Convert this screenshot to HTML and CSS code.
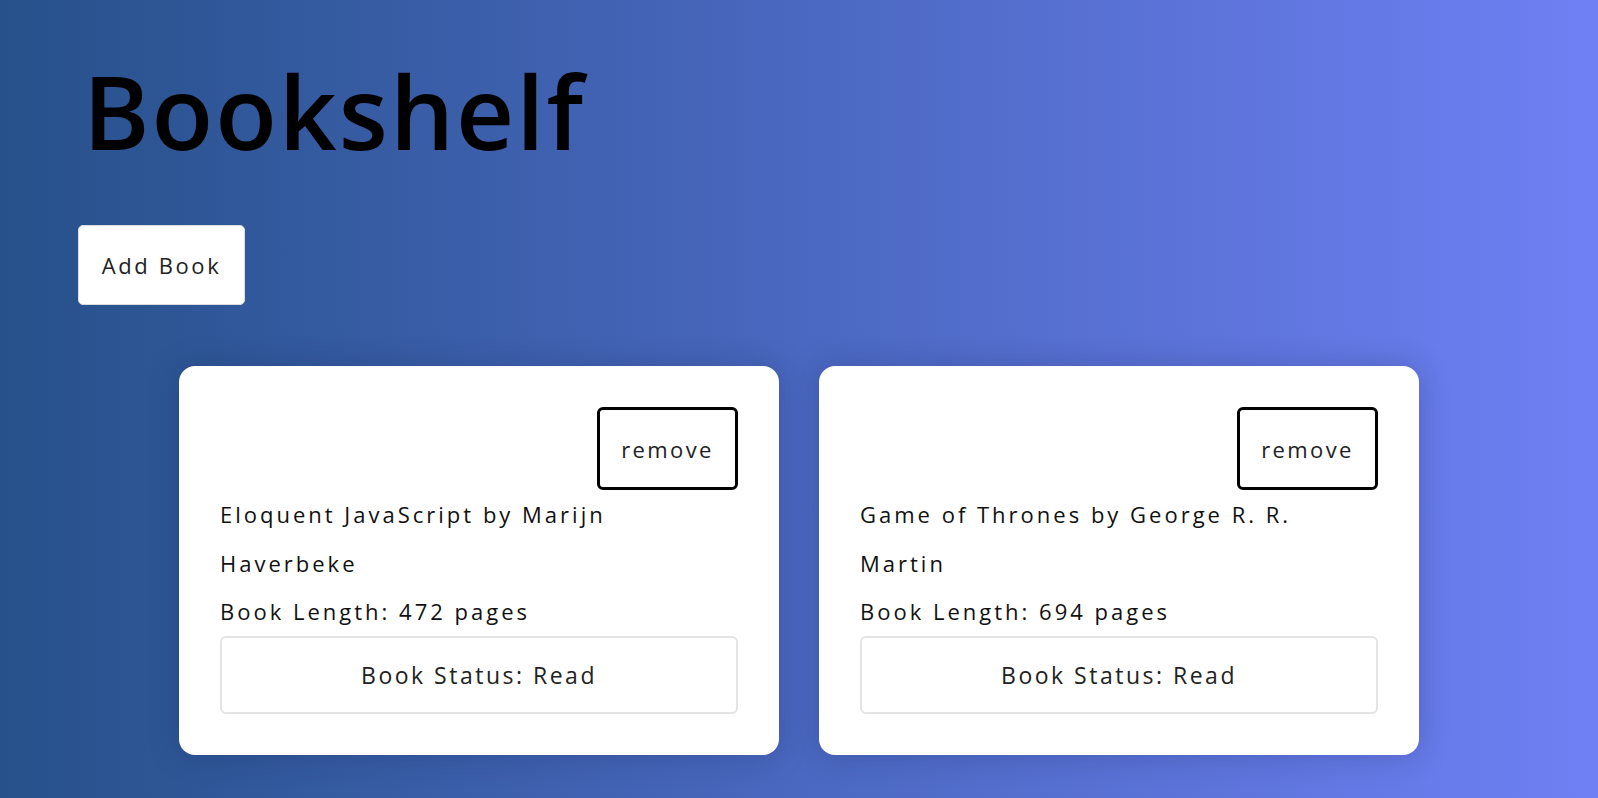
FILE: index.html
```html
<!DOCTYPE html>
<html lang="en">
<head>
<meta charset="utf-8">
<title>Bookshelf</title>
<link rel="stylesheet" href="styles.css">
</head>
<body>
<main class="page">
  <h1 class="title">Bookshelf</h1>
  <button class="add-btn">Add Book</button>
  <section class="shelf">
    <article class="card">
      <button class="remove-btn">remove</button>
      <p class="book-line">Eloquent JavaScript by Marijn Haverbeke</p>
      <p class="book-line">Book Length: 472 pages</p>
      <button class="status-btn">Book Status: Read</button>
    </article>
    <article class="card">
      <button class="remove-btn">remove</button>
      <p class="book-line">Game of Thrones by George R. R. Martin</p>
      <p class="book-line">Book Length: 694 pages</p>
      <button class="status-btn">Book Status: Read</button>
    </article>
  </section>
</main>
</body>
</html>
```
FILE: styles.css
```css
* { box-sizing: border-box; }
html, body { margin: 0; height: 100%; }
body {
  background: linear-gradient(to right, #26518a 0%, #4a68c0 50%, #6f80f4 100%);
  font-family: "Open Sans", "Noto Sans", sans-serif;
  overflow: hidden;
}
.page {
  padding: 57px 78px 0;
  display: flex;
  flex-direction: column;
  align-items: flex-start;
}
.title {
  margin: 0 0 -2px 5px;
  font-size: 101px;
  line-height: 108px;
  font-weight: 600;
  color: #000;
  letter-spacing: 2px;
}
.add-btn {
  margin-top: 62px;
  width: 167px;
  height: 80px;
  background: #fff;
  border: 1px solid #dcdcdc;
  border-radius: 5px;
  font-family: "Open Sans", sans-serif;
  font-size: 22px;
  letter-spacing: 2.6px;
  color: #222;
  padding: 0;
}
.shelf {
  align-self: stretch;
  margin-top: 61px;
  display: flex;
  justify-content: center;
  gap: 40px;
}
.card {
  width: 600px;
  padding: 41px;
  background: #fff;
  border-radius: 16px;
  box-shadow: 0 0 30px rgba(20, 30, 80, 0.25);
  display: flex;
  flex-direction: column;
}
.remove-btn {
  align-self: flex-end;
  width: 141px;
  height: 83px;
  background: #fff;
  border: 3.5px solid #000;
  border-radius: 6px;
  font-family: "Open Sans", sans-serif;
  font-size: 22px;
  letter-spacing: 2.4px;
  color: #222;
  padding: 0;
}
.book-line {
  margin: 0;
  font-size: 22px;
  line-height: 48.5px;
  letter-spacing: 3px;
  color: #111;
}
.status-btn {
  width: 100%;
  height: 78px;
  background: #fff;
  border: 2px solid #e4e4e4;
  border-radius: 6px;
  font-family: "Open Sans", sans-serif;
  font-size: 23px;
  letter-spacing: 2.5px;
  color: #222;
  padding: 0;
}
```
